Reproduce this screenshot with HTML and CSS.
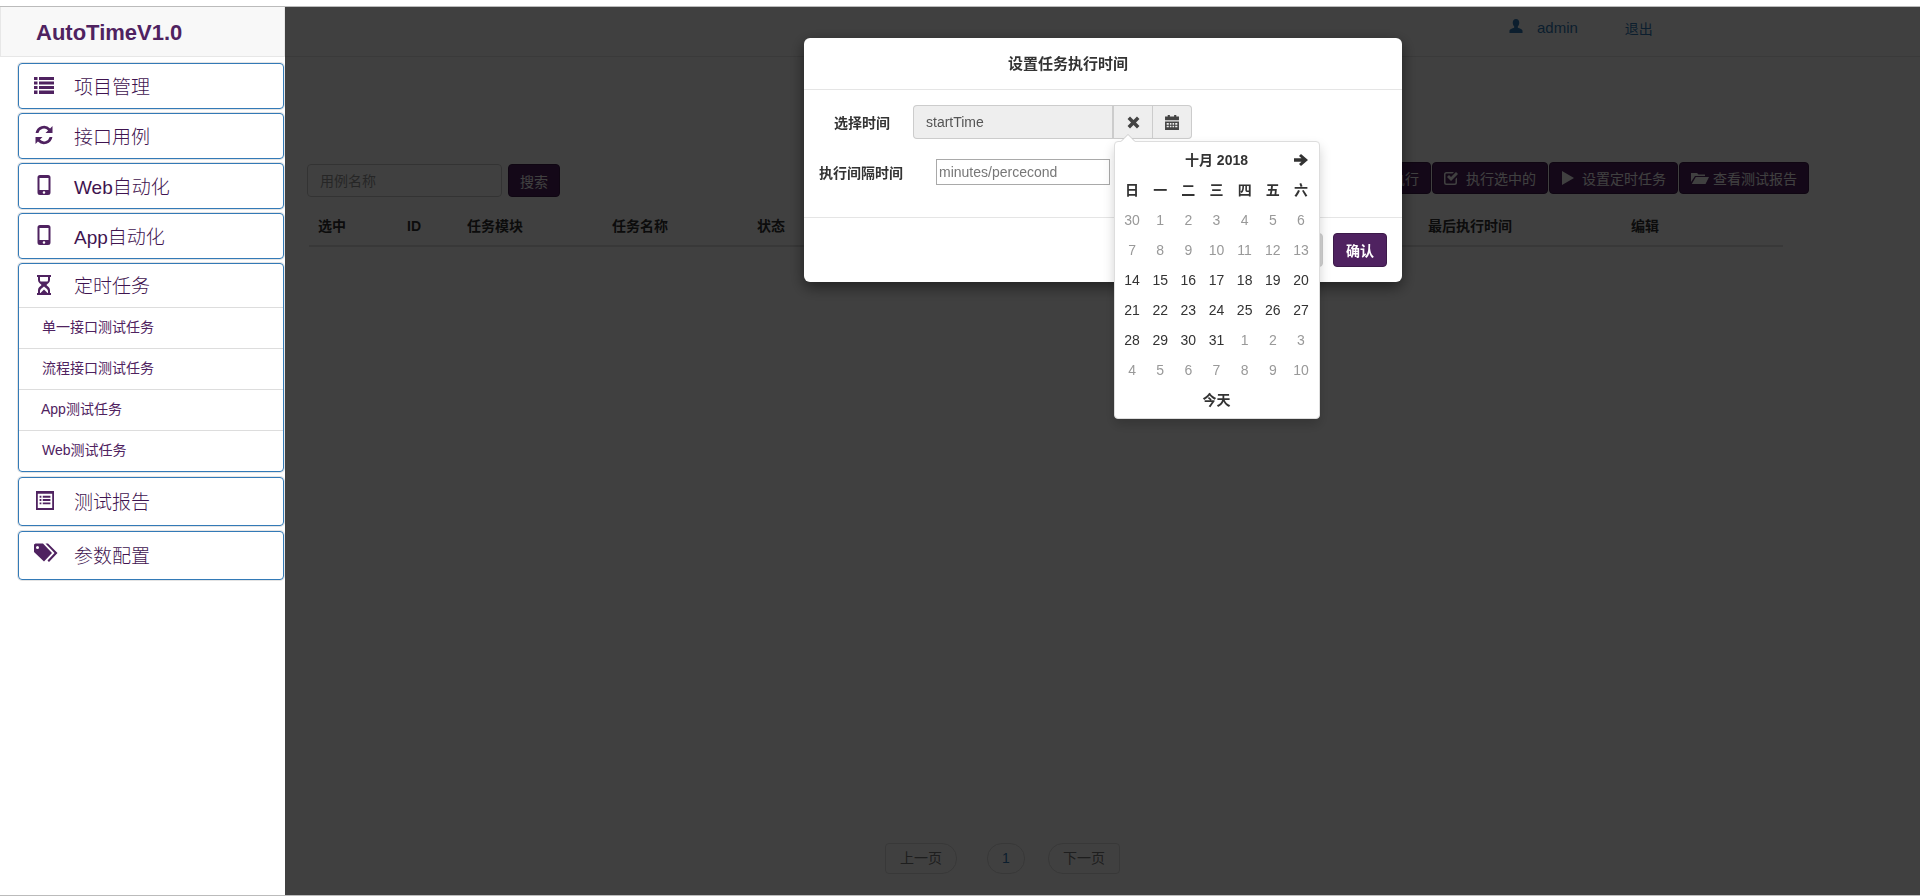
FILE: index.html
```html
<!DOCTYPE html>
<html lang="en">
<head>
  <meta charset="UTF-8" />
  <title>AutoTime</title>
  <link rel="stylesheet" href="styles.css">
</head>
<body>
  <div class="page">
    <aside class="sidebar">
      <div class="brand">AutoTimeV1.0</div>
      <ul class="menu">
        <li class="menu-item">
          <a class="menu-link">
            <svg class="ico" viewBox="0 0 20 20"><path d="M0 2h3.500v3H0zM5 2h15v3H5zM0 6.500h3.500v3H0zM5 6.500h15v3H5zM0 11h3.500v3H0zM5 11h15v3H5zM0 15.500h3.500v3.500H0zM5 15.500h15v3.500H5z"/></svg>
            <span>项目管理</span>
          </a>
        </li>
        <li class="menu-item">
          <a class="menu-link">
            <svg class="ico" viewBox="0 0 20 20"><path d="M18.500 1v7h-7l2.600-2.600A5.700 5.700 0 0 0 4.400 8H1.600A8.500 8.500 0 0 1 16.100 3.400zM1.500 19v-7h7l-2.600 2.600a5.700 5.700 0 0 0 9.700-2.600h2.800A8.500 8.500 0 0 1 3.900 16.600z"/></svg>
            <span>接口用例</span>
          </a>
        </li>
        <li class="menu-item">
          <a class="menu-link">
            <svg class="ico" viewBox="0 0 20 20"><path fill-rule="evenodd" d="M6 0h8a2.500 2.500 0 0 1 2.500 2.500v15A2.500 2.500 0 0 1 14 20H6a2.500 2.500 0 0 1-2.500-2.500v-15A2.500 2.500 0 0 1 6 0zM5.500 3v12h9V3zM10 16.200a1.300 1.300 0 1 0 0 2.600 1.300 1.300 0 0 0 0-2.600z"/></svg>
            <span>Web自动化</span>
          </a>
        </li>
        <li class="menu-item">
          <a class="menu-link">
            <svg class="ico" viewBox="0 0 20 20"><path fill-rule="evenodd" d="M6 0h8a2.500 2.500 0 0 1 2.500 2.500v15A2.500 2.500 0 0 1 14 20H6a2.500 2.500 0 0 1-2.500-2.500v-15A2.500 2.500 0 0 1 6 0zM5.500 3v12h9V3zM10 16.200a1.300 1.300 0 1 0 0 2.600 1.300 1.300 0 0 0 0-2.600z"/></svg>
            <span>App自动化</span>
          </a>
        </li>
        <li class="menu-item menu-item-open">
          <a class="menu-link">
            <svg class="ico" viewBox="0 0 20 20"><path fill-rule="evenodd" d="M3 0h14v2h-1v3c0 2.500-2.500 3.800-3.600 5C13.500 11.200 16 12.500 16 15v3h1v2H3v-2h1v-3c0-2.500 2.500-3.800 3.600-5C6.500 8.800 4 7.500 4 5V2H3zM6 2v3c0 .6.200 1 .5 1.500h7c.3-.5.500-.9.500-1.500V2zM10 11.500C8.800 12.800 6 14 6 16v2h8v-2c0-2-2.800-3.200-4-4.500z"/><path d="M6.500 18 10 14.500l3.500 3.500z"/></svg>
            <span>定时任务</span>
          </a>
          <ul class="submenu">
            <li class="sub-a">单一接口测试任务</li>
            <li class="sub-a">流程接口测试任务</li>
            <li>App测试任务</li>
            <li class="sub-a">Web测试任务</li>
          </ul>
        </li>
        <li class="menu-item menu-item-tall">
          <a class="menu-link">
            <svg class="ico ico-report" viewBox="0 0 20 20" preserveAspectRatio="none"><path fill-rule="evenodd" d="M0 0h20v20H0zM2 3v15h16V3zM4 5h2v2H4zM7.500 5H16v2H7.500zM4 8.500h2v2H4zM7.500 8.500H16v2H7.500zM4 12h2v2H4zM7.500 12H16v2H7.500z"/></svg>
            <span>测试报告</span>
          </a>
        </li>
        <li class="menu-item menu-item-tall">
          <a class="menu-link">
            <svg class="ico ico-tags" viewBox="0 0 24 20"><path fill-rule="evenodd" d="M0 1.500 0 9l10 9.500 8-8.500L9 0.500 1.500 0.500zM3.500 3a1.500 1.500 0 1 1 0 3 1.500 1.500 0 0 1 0-3z"/><path d="M11.500 0.500h2.500l9.500 9.500-8.500 9-1.500-1.500 7-7.500z"/></svg>
            <span>参数配置</span>
          </a>
        </li>
      </ul>
    </aside>

    <main class="content">
      <header class="topbar">
        <svg class="user-ico" viewBox="1 0 14 15"><path d="M8 0c2.300 0 3.500 1.700 3.500 4 0 1.500-.6 3-1.500 3.800v1.500c1.800.7 5 1.500 5 3.200V15H1v-2.500c0-1.700 3.200-2.500 5-3.200V7.800C5.100 7 4.500 5.500 4.500 4 4.500 1.700 5.700 0 8 0z"/></svg>
        <a class="user-name">admin</a>
        <a class="logout">退出</a>
      </header>

      <div class="toolbar">
        <div class="search">
          <input class="search-input" placeholder="用例名称">
          <button class="btn">搜索</button>
        </div>
        <div class="actions">
          <button class="btn">立即执行</button>
          <button class="btn">
            <svg class="btn-ico" viewBox="0 0 14 14"><path d="M2.500 1H10L8.500 2.500h-6a1 1 0 0 0-1 1v8a1 1 0 0 0 1 1h8a1 1 0 0 0 1-1V8L13 6.500v5A2.500 2.500 0 0 1 10.500 14h-8A2.500 2.500 0 0 1 0 11.500v-8A2.500 2.500 0 0 1 2.500 1zM3 6l2-2 2 2 5-5 2 2-7 7z"/></svg>
            执行选中的
          </button>
          <button class="btn">
            <svg class="btn-ico btn-ico-play" viewBox="0 0 14 14"><path d="M1 0l12 7-12 7z"/></svg>
            设置定时任务
          </button>
          <button class="btn">
            <svg class="btn-ico btn-ico-wide" viewBox="0 0 18 14"><path d="M0 2h6l1.500 1.500H14V5H4L0 11zM4.800 6H18l-3.500 7H.8z"/></svg>
            查看测试报告
          </button>
        </div>
      </div>

      <table class="task-table">
        <thead>
          <tr>
            <th class="col-check">选中</th>
            <th class="col-id">ID</th>
            <th class="col-task">任务模块</th>
            <th class="col-task">任务名称</th>
            <th class="col-task">状态</th>
            <th class="col-mid"></th>
            <th class="col-last">最后执行时间</th>
            <th>编辑</th>
          </tr>
        </thead>
      </table>

      <nav class="pager">
        <a class="page-btn page-prev">上一页</a>
        <a class="page-btn page-num">1</a>
        <a class="page-btn page-next">下一页</a>
      </nav>
    </main>
  </div>

  <div class="backdrop"></div>

  <div class="modal">
    <div class="modal-head">设置任务执行时间</div>
    <div class="modal-body">
      <div class="row row-time">
        <label class="label-time">选择时间</label>
        <div class="input-group">
          <input class="time-input" value="startTime" readonly>
          <span class="addon">
            <svg class="addon-ico" viewBox="0 0 12 12"><path d="M2.800.5 6 3.700 9.200.5 11.500 2.800 8.300 6l3.200 3.200-2.300 2.300L6 8.300 2.800 11.500.5 9.200 3.700 6 .5 2.800z"/></svg>
          </span>
          <span class="addon addon-last">
            <svg class="addon-ico addon-ico-cal" viewBox="0.500 0 13 14"><path fill-rule="evenodd" d="M3 0h2v1.500h4V0h2v1.500h2.500V5H.5V1.500H3zM.5 6h13v8H.5zM2 7.500V9h2V7.500zM5 7.500V9h1.500V7.500zM7.500 7.500V9H9V7.500zM10 7.500V9h2V7.500zM2 10v1.500h2V10zM5 10v1.500h1.500V10zM7.500 10v1.500H9V10zM10 10v1.500h2V10z"/></svg>
          </span>
        </div>
      </div>
      <div class="row row-interval">
        <label class="label-interval">执行间隔时间</label>
        <input class="interval-input" placeholder="minutes/percecond">
      </div>
    </div>
    <div class="modal-foot">
      <button class="btn-cancel">取消</button>
      <button class="btn-ok">确认</button>
    </div>

    <div class="datepicker">
      <div class="dp-head">
        <span class="dp-title">十月 2018</span>
        <svg class="dp-next" viewBox="0 0 14 12"><path d="M7 0 14 6 7 12 5 10 7.500 7.800H0V4.200H7.500L5 2z"/></svg>
      </div>
      <div class="dp-grid">
        <span class="dow">日</span><span class="dow">一</span><span class="dow">二</span><span class="dow">三</span><span class="dow">四</span><span class="dow">五</span><span class="dow">六</span>
        <span class="old">30</span><span class="old">1</span><span class="old">2</span><span class="old">3</span><span class="old">4</span><span class="old">5</span><span class="old">6</span>
        <span class="old">7</span><span class="old">8</span><span class="old">9</span><span class="old">10</span><span class="old">11</span><span class="old">12</span><span class="old">13</span>
        <span>14</span><span>15</span><span>16</span><span>17</span><span>18</span><span>19</span><span>20</span>
        <span>21</span><span>22</span><span>23</span><span>24</span><span>25</span><span>26</span><span>27</span>
        <span>28</span><span>29</span><span>30</span><span>31</span><span class="old">1</span><span class="old">2</span><span class="old">3</span>
        <span class="old">4</span><span class="old">5</span><span class="old">6</span><span class="old">7</span><span class="old">8</span><span class="old">9</span><span class="old">10</span>
      </div>
      <div class="dp-today">今天</div>
    </div>
  </div>
</body>
</html>
```

FILE: styles.css
```css
html, body {
  margin: 0;
  height: 100%;
  overflow: hidden;
  background: #fff;
  font-family: "Liberation Sans", "Noto Sans CJK SC", sans-serif;
  font-size: 14px;
  color: #333;
}
ul {
  list-style: none;
  margin: 0;
  padding: 0;
}
button, input {
  font-family: inherit;
}
.page {
  display: flex;
  box-sizing: border-box;
  height: 890px;
  margin-top: 6px;
  border-top: 1px solid #bbb;
  border-bottom: 1px solid #bbb;
}
.sidebar {
  width: 285px;
  flex-shrink: 0;
}
.brand {
  height: 49px;
  line-height: 51px;
  padding-left: 35px;
  background: #f8f8f8;
  border: 1px solid #e7e7e7;
  border-top: 0;
  font-size: 22px;
  font-weight: bold;
  color: #4f2260;
}
.menu {
  padding: 6px 1px 0 18px;
}
.menu-item {
  border: 1px solid #337ab7;
  border-radius: 4px;
  margin-bottom: 4px;
  box-shadow: 0 0 0 1px #e4e4e4;
}
.menu-link {
  display: flex;
  align-items: center;
  height: 44px;
  padding-left: 15px;
  font-size: 19px;
  font-weight: 300;
  color: #3f1450;
}
.menu-link span {
  margin-top: -2px;
}
.menu-item-open {
  margin-bottom: 5px;
}
.menu-item-open .menu-link {
  height: 43px;
}
.menu-item-tall {
  margin-bottom: 5px;
}
.menu-item-tall .menu-link {
  height: 47px;
}
.ico {
  width: 20px;
  height: 20px;
  margin-right: 20px;
  margin-top: -2px;
  fill: #4f2260;
  flex-shrink: 0;
}
.ico-report {
  width: 18px;
  height: 19px;
  margin-left: 2px;
  margin-top: -3px;
}
.ico-tags {
  width: 24px;
  margin-right: 16px;
  margin-top: -5px;
}
.submenu li {
  height: 40px;
  line-height: 39px;
  border-top: 1px solid #ddd;
  padding-left: 22px;
  font-size: 14px;
  color: #4f2260;
}
.submenu .sub-a {
  padding-left: 23px;
}
.content {
  display: flex;
  flex-direction: column;
  flex: 1;
  min-width: 0;
  padding-left: 22px;
}
.topbar {
  display: flex;
  align-items: center;
  height: 41px;
  padding-bottom: 8px;
  margin-left: -22px;
  padding-left: 1223px;
  border-bottom: 1px solid #e7e7e7;
  color: #337ab7;
}
.user-ico {
  width: 16px;
  height: 14px;
  fill: #337ab7;
  margin-right: 13px;
  margin-top: -3px;
}
.user-name {
  margin-right: 47px;
  font-size: 15px;
}
.logout {
  font-size: 14px;
}
.toolbar {
  display: flex;
  align-items: flex-start;
  justify-content: space-between;
  flex-shrink: 0;
  margin-top: 105px;
  height: 50px;
  padding-right: 111px;
}
.search {
  display: flex;
  gap: 6px;
  padding-top: 2px;
}
.search-input {
  box-sizing: border-box;
  width: 195px;
  height: 33px;
  padding: 6px 12px;
  border: 1px solid #ccc;
  border-radius: 4px;
  font-size: 14px;
}
.search-input::placeholder {
  color: #999;
}
.actions {
  display: flex;
  gap: 1px;
}
.btn {
  display: inline-flex;
  align-items: center;
  box-sizing: border-box;
  height: 32px;
  padding: 0 11px;
  background: #4f2260;
  border: 1px solid #3c1a49;
  border-radius: 4px;
  color: #fff;
  font-size: 14px;
  white-space: nowrap;
}
.search .btn {
  height: 33px;
}
.btn-ico {
  width: 14px;
  height: 14px;
  fill: #fff;
  margin-right: 8px;
}
.btn-ico-play {
  margin-right: 7px;
}
.btn-ico-wide {
  width: 18px;
  margin-right: 4px;
}
.task-table {
  width: 1474px;
  table-layout: fixed;
  border-collapse: collapse;
  margin-left: 2px;
  flex-shrink: 0;
}
.task-table th {
  box-sizing: border-box;
  text-align: left;
  font-size: 14px;
  line-height: 20px;
  font-weight: bold;
  padding: 4px 8px 9px;
  border-bottom: 2px solid #ddd;
  color: #333;
}
.task-table .col-check {
  width: 90px;
  padding-left: 9px;
}
.col-id { width: 60px; }
.col-task { width: 145px; }
.col-mid { width: 526px; }
.col-last { width: 203px; }
.pager {
  display: flex;
  margin: auto 0 21px 578px;
}
.page-btn {
  box-sizing: border-box;
  height: 31px;
  line-height: 29px;
  border: 1px solid #ddd;
  text-align: center;
  font-size: 14px;
  color: #337ab7;
}
.page-prev {
  width: 72px;
  border-radius: 4px 15px 15px 4px;
  color: #777;
  margin-right: 30px;
}
.page-num {
  width: 38px;
  border-radius: 15px;
  margin-right: 23px;
}
.page-next {
  width: 72px;
  border-radius: 15px 4px 4px 15px;
  color: #777;
}
.backdrop {
  position: fixed;
  top: 7px;
  left: 285px;
  right: 0;
  bottom: 1px;
  background: rgba(0, 0, 0, 0.75);
}
.modal {
  position: fixed;
  left: 804px;
  top: 38px;
  width: 598px;
  height: 244px;
  background: #fff;
  border-radius: 6px;
  box-shadow: 0 5px 15px rgba(0, 0, 0, 0.5);
}
.modal-head {
  height: 51px;
  line-height: 52px;
  padding-right: 70px;
  text-align: center;
  border-bottom: 1px solid #e5e5e5;
  font-size: 15px;
  font-weight: bold;
}
.modal-body {
  height: 128px;
  border-bottom: 1px solid #e5e5e5;
  box-sizing: border-box;
  padding-top: 15px;
}
.row {
  display: flex;
  align-items: center;
  font-size: 14px;
  font-weight: bold;
}
.label-time {
  margin-left: 30px;
  width: 79px;
}
.label-interval {
  margin-left: 15px;
  width: 117px;
}
.row-interval {
  margin-top: 20px;
}
.input-group {
  display: flex;
  height: 34px;
}
.time-input {
  box-sizing: border-box;
  width: 201px;
  height: 34px;
  padding: 6px 12px;
  background: #eee;
  border: 1px solid #ccc;
  border-right-width: 2px;
  border-radius: 4px 0 0 4px;
  font-size: 14px;
  color: #555;
  outline: none;
}
.addon {
  box-sizing: border-box;
  display: flex;
  align-items: center;
  justify-content: center;
  width: 39px;
  height: 34px;
  background: #eee;
  border: 1px solid #ccc;
  border-left: 0;
}
.addon-last {
  border-radius: 0 4px 4px 0;
}
.addon-ico {
  width: 13px;
  height: 13px;
  fill: #444;
}
.addon-ico-cal {
  width: 14px;
  height: 15px;
}
.interval-input {
  box-sizing: border-box;
  width: 174px;
  height: 26px;
  padding: 1px 2px;
  border: 1px solid #a9a9a9;
  font-size: 14px;
}
.interval-input::placeholder {
  color: #777;
}
.modal-foot {
  display: flex;
  justify-content: flex-end;
  gap: 10px;
  padding: 15px 15px 0 0;
}
.btn-cancel, .btn-ok {
  box-sizing: border-box;
  width: 54px;
  height: 34px;
  border-radius: 4px;
  font-size: 14px;
  font-weight: bold;
}
.btn-cancel {
  background: #d4d4d4;
  border: 1px solid #ccc;
  color: #333;
}
.btn-ok {
  background: #4f2260;
  border: 1px solid #3c1a49;
  color: #fff;
}
.datepicker {
  position: absolute;
  left: 310px;
  top: 103px;
  box-sizing: border-box;
  width: 206px;
  height: 278px;
  background: #fff;
  border: 1px solid #ddd;
  border-radius: 4px;
  box-shadow: 0 6px 12px rgba(0, 0, 0, 0.175);
  padding: 3px;
}
.datepicker::before {
  content: "";
  position: absolute;
  left: 6px;
  top: -7px;
  border-left: 7px solid transparent;
  border-right: 7px solid transparent;
  border-bottom: 7px solid #fff;
  filter: drop-shadow(0 -1px 0 #ccc);
}
.dp-head {
  position: relative;
  width: 197px;
  height: 30px;
  line-height: 30px;
  text-align: center;
  font-size: 14px;
  font-weight: bold;
}
.dp-next {
  position: absolute;
  right: 7px;
  top: 9px;
  width: 14px;
  height: 12px;
  fill: #333;
}
.dp-grid {
  display: grid;
  width: 197px;
  grid-template-columns: repeat(7, 1fr);
  grid-auto-rows: 30px;
  line-height: 30px;
  text-align: center;
  font-size: 14px;
}
.dow {
  font-size: 14px;
  font-weight: bold;
}
.old {
  color: #999;
}
.dp-today {
  width: 197px;
  height: 30px;
  line-height: 30px;
  text-align: center;
  font-size: 14px;
  font-weight: bold;
}
```
